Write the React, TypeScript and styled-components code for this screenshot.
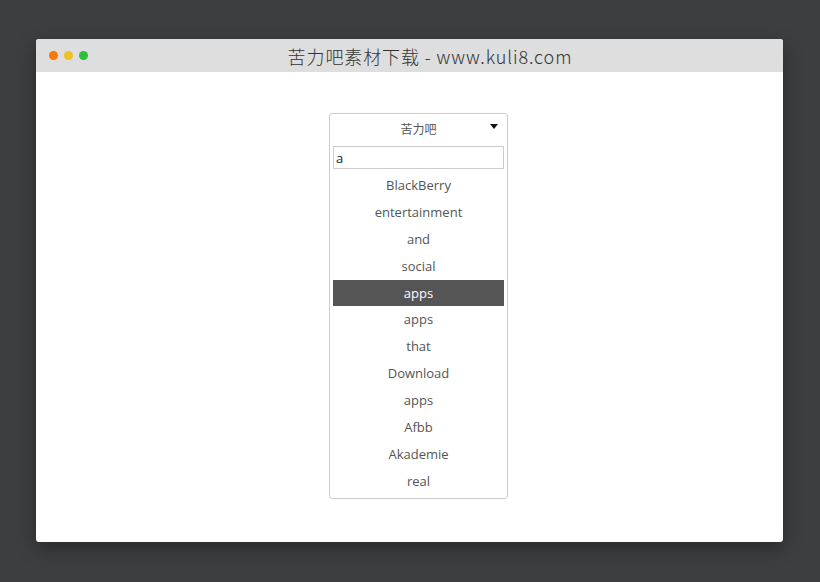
import React, { useState } from "react";
import styled, { createGlobalStyle } from "styled-components";

const items = [
  "BlackBerry",
  "entertainment",
  "and",
  "social",
  "apps",
  "apps",
  "that",
  "Download",
  "apps",
  "Afbb",
  "Akademie",
  "real",
];

const GlobalStyle = createGlobalStyle`
  html, body {
    margin: 0;
    padding: 0;
    background: #3d3e40;
  }
  body {
    font-family: "Open Sans", "Noto Sans", "Noto Sans CJK SC", sans-serif;
  }
`;

export default function App() {
  const [query, setQuery] = useState("a");
  const [active] = useState(4);

  return (
    <>
      <GlobalStyle />
      <Page>
        <Window>
          <TitleBar>
            <Dots>
              <Dot color="#f7780c" />
              <Dot color="#efc31d" />
              <Dot color="#2dbe3c" />
            </Dots>
            <Title>苦力吧素材下载 - www.kuli8.com</Title>
          </TitleBar>
          <Content>
            <Dropdown>
              <Header>
                <HeaderLabel>苦力吧</HeaderLabel>
                <Arrow />
              </Header>
              <Search value={query} onChange={(e) => setQuery(e.target.value)} autoFocus />
              <List>
                {items.map((item, i) => (
                  <Item key={i} $active={i === active}>
                    {item}
                  </Item>
                ))}
              </List>
            </Dropdown>
          </Content>
        </Window>
      </Page>
    </>
  );
}

const Page = styled.div`
  padding: 39px 37px 40px 36px;
`;

const Window = styled.div`
  height: 503px;
  background: #fff;
  border-radius: 3px;
  overflow: hidden;
  box-shadow: 0 6px 18px rgba(0, 0, 0, 0.35);
  display: flex;
  flex-direction: column;
`;

const TitleBar = styled.div`
  height: 33px;
  background: #dedede;
  display: flex;
  align-items: center;
  position: relative;
  flex-shrink: 0;
`;

const Dots = styled.div`
  display: flex;
  gap: 6px;
  padding-left: 13px;
`;

const Dot = styled.span<{ color: string }>`
  width: 9px;
  height: 9px;
  border-radius: 50%;
  background: ${(p) => p.color};
`;

const Title = styled.div`
  position: absolute;
  left: 41px;
  right: 0;
  text-align: center;
  font-family: "Noto Sans CJK SC", sans-serif;
  font-weight: 300;
  font-size: 18px;
  letter-spacing: 0.9px;
  color: #333;
  pointer-events: none;
`;

const Content = styled.div`
  padding: 41px 0 0 293px;
`;

const Dropdown = styled.div`
  width: 171px;
  border: 1px solid #ccc;
  border-radius: 3px;
  padding: 0 3px 3px;
`;

const Header = styled.div`
  height: 28px;
  display: flex;
  align-items: center;
  justify-content: center;
  position: relative;
`;

const HeaderLabel = styled.span`
  font-family: "Noto Sans CJK SC", sans-serif;
  font-size: 12px;
  color: #555;
`;

const Arrow = styled.span`
  position: absolute;
  right: 6px;
  top: 10px;
  width: 0;
  height: 0;
  border-left: 4px solid transparent;
  border-right: 4px solid transparent;
  border-top: 5px solid #111;
`;

const Search = styled.input`
  display: block;
  box-sizing: border-box;
  width: 171px;
  height: 23px;
  margin: 4px 0 0;
  border: 1px solid #ccc;
  padding: 0 2px;
  font-family: "Open Sans", sans-serif;
  font-size: 13px;
  color: #222;
  outline: none;
`;

const List = styled.div`
  margin-top: 3px;
`;

const Item = styled.div<{ $active: boolean }>`
  height: 26.9px;
  line-height: 26px;
  text-align: center;
  font-size: 13px;
  color: ${(p) => (p.$active ? "#fff" : "#555")};
  background: ${(p) => (p.$active ? "#555" : "transparent")};
`;
